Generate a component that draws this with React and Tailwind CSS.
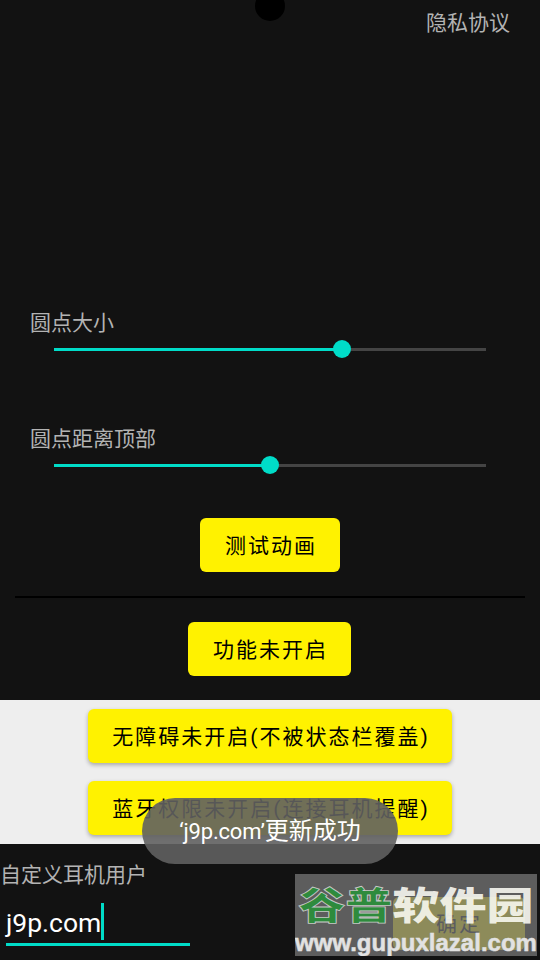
const FONT = "font-['Roboto','Noto_Sans_CJK_SC',sans-serif]"

function Slider({ label, fill }) {
  return (
    <div>
      <div className="pl-[30px] text-[21px] leading-[28px] text-[#b3b3b3]">{label}</div>
      <div className="relative mx-[54px] mt-[11px] h-[3px] bg-[#444444]">
        <div className={`relative h-[3px] bg-[#00dcc8] ${fill}`}>
          <div className="absolute right-[-9px] top-[-8px] h-[18px] w-[18px] rounded-full bg-[#00dcc8]" />
        </div>
      </div>
    </div>
  )
}

function YellowButton({ children, className }) {
  return (
    <button className={`flex h-[54px] items-center justify-center rounded-[6px] bg-[#fff200] pl-[2px] pt-[3px] text-[21px] tracking-[2px] text-black ${className}`}>
      {children}
    </button>
  )
}

export default function App() {
  return (
    <div className={`relative h-[960px] w-[540px] overflow-hidden bg-[#121212] ${FONT}`}>
      {/* preview dot */}
      <div className="absolute left-[255px] top-[-9px] h-[30px] w-[30px] rounded-full bg-black" />

      <div className="flex justify-end pr-[30px] pt-[9px] text-[21px] leading-[28px] text-[#b3b3b3]">隐私协议</div>

      <div className="mt-[272px]">
        <Slider label="圆点大小" fill="w-[288px]" />
      </div>
      <div className="mt-[74px]">
        <Slider label="圆点距离顶部" fill="w-[216px]" />
      </div>

      <div className="mt-[51px] flex justify-center">
        <YellowButton className="w-[140px]">测试动画</YellowButton>
      </div>
      <div className="mx-[15px] mt-[24px] h-[2px] bg-black" />
      <div className="mt-[24px] flex justify-center">
        <YellowButton className="mr-px w-[163px]">功能未开启</YellowButton>
      </div>

      <div className="mt-[24px] flex h-[144px] flex-col items-center gap-[18px] bg-[#eeeeee] pt-[9px]">
        <YellowButton className="w-[364px] shadow-[0_2px_4px_rgba(0,0,0,0.3)]">无障碍未开启(不被状态栏覆盖)</YellowButton>
        <YellowButton className="w-[364px] shadow-[0_2px_4px_rgba(0,0,0,0.3)]">蓝牙权限未开启(连接耳机提醒)</YellowButton>
      </div>

      <div className="pt-[17px] text-[21px] leading-[28px] text-[#b3b3b3]">自定义耳机用户</div>
      <div className="flex items-start justify-between pr-[15px] pt-[8px]">
        <div className="ml-[6px] h-[49px] w-[184px] border-b-[3px] border-[#00dcc8]">
          <div className="flex h-[46px] items-center pt-[3px] text-[26.5px] leading-[32px] text-white">
            <span className="mt-[2px]">j9p.com</span>
            <span className="h-[37px] w-[3px] bg-[#00dcc8]" />
          </div>
        </div>
        <button className="h-[53px] w-[132px] rounded-[6px] bg-[#fff200] pt-[3px] text-[21px] tracking-[2px] text-[#000820]">确定</button>
      </div>

      {/* toast */}
      <div className="absolute left-[142px] top-[798px] flex h-[66px] w-[256px] items-center justify-center rounded-[33px] bg-[#606060]/90 text-[24px] text-white">
        <span className="text-[22px] tracking-[-0.2px]">‘j9p.com’</span>更新成功
      </div>

      {/* watermark */}
      <div className="absolute left-[295px] top-[874px] flex h-[82px] w-[242px] flex-col items-center overflow-hidden bg-[#707070]/80">
        <div className="mt-[8px] flex h-[50px] origin-center scale-y-[0.8] items-center text-[47px] font-black leading-none">
          <span className="text-[#2e8b3d] [-webkit-text-stroke:1px_#c8c8c8]">谷普</span>
          <span className="text-[#fbfbf4]/90">软件园</span>
        </div>
        <div className="whitespace-nowrap font-['Liberation_Sans',sans-serif] text-[24px] font-bold leading-[28px] text-[#e2e2e2] [-webkit-text-stroke:0.5px_#e2e2e2]">www.gupuxlazal.com</div>
      </div>
    </div>
  )
}
